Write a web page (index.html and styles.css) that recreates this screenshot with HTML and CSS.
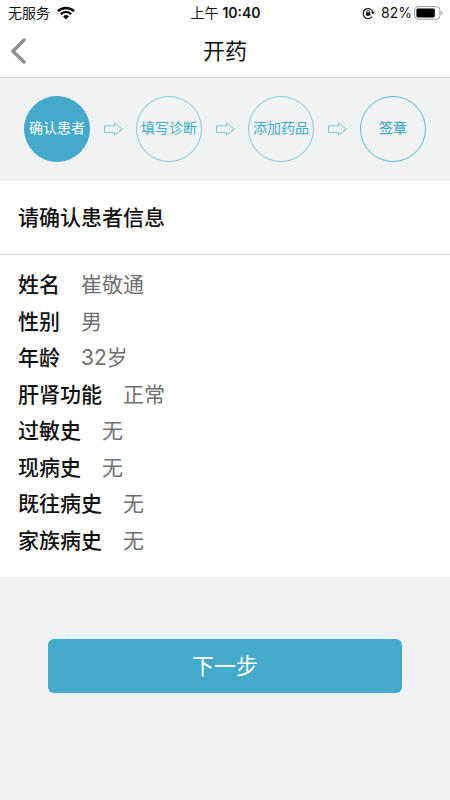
FILE: index.html
```html
<!DOCTYPE html>
<html lang="zh-CN">
<head>
  <meta charset="UTF-8" />
  <meta name="viewport" content="width=device-width, initial-scale=1.0"/>
  <title>开药</title>

  <link rel="stylesheet" href="styles.css">
</head>

<body>
  <div class="status-bar">
    <div class="status-left">
      <span>无服务</span>
      <svg class="wifi" width="18" height="14" viewBox="0 0 18 14">
        <path d="M1 5.2a11.5 11.5 0 0 1 16 0" fill="none" stroke="#000" stroke-width="2.4"/>
        <path d="M3.8 8.2a7.4 7.4 0 0 1 10.4 0" fill="none" stroke="#000" stroke-width="2.1"/>
        <path d="M9 13.4L6.1 10.5a4.1 4.1 0 0 1 5.8 0z"/>
      </svg>
    </div>
    <div class="status-time">上午 <b>10:40</b></div>
    <div class="status-right">
      <svg class="lock" width="13" height="12" viewBox="0 0 13 12">
        <path d="M10.2 9.5A5 5 0 1 1 11 5.2" fill="none" stroke="#111" stroke-width="1.2"/>
        <path d="M8.9 4.8h4L11 7.6z" fill="#111"/>
        <rect x="4" y="5.2" width="4.4" height="3.6" rx=".5" fill="#111"/>
        <path d="M4.9 5.6V4.5a1.3 1.3 0 0 1 2.6 0v1.1" fill="none" stroke="#111" stroke-width=".9"/>
      </svg>
      <span>82%</span>
      <svg class="battery" width="29" height="14" viewBox="0 0 29 14">
        <rect x=".6" y=".6" width="25.3" height="12.6" rx="3.4" fill="none" stroke="#999" stroke-width="1"/>
        <rect x="2.4" y="2.4" width="18.4" height="9" rx="1.4"/>
        <path d="M27.2 4.8c1.5.8 1.5 3.4 0 4.2z" fill="#999"/>
      </svg>
    </div>
  </div>

  <header class="nav-bar">
    <button class="back" type="button" aria-label="返回">
      <svg width="16" height="26" viewBox="0 0 16 26">
        <path d="M14 2L3 13.2L14 24" fill="none" stroke="#8e8e93" stroke-width="3.4" stroke-linecap="round"/>
      </svg>
    </button>
    <h1>开药</h1>
  </header>

  <ol class="steps">
    <li class="step active">确认患者</li>
    <li class="arrow"><svg width="20" height="14" viewBox="0 0 20 14"><path d="M1.5 3.8H11.5V1L19.3 7.2L11.5 13V10.5H1.5z"/></svg></li>
    <li class="step">填写诊断</li>
    <li class="arrow"><svg width="20" height="14" viewBox="0 0 20 14"><path d="M1.5 3.8H11.5V1L19.3 7.2L11.5 13V10.5H1.5z"/></svg></li>
    <li class="step">添加药品</li>
    <li class="arrow"><svg width="20" height="14" viewBox="0 0 20 14"><path d="M1.5 3.8H11.5V1L19.3 7.2L11.5 13V10.5H1.5z"/></svg></li>
    <li class="step sign">签章</li>
  </ol>

  <main>
    <section class="patient">
      <h2>请确认患者信息</h2>
      <dl class="info">
        <div class="row"><dt>姓名</dt><dd>崔敬通</dd></div>
        <div class="row"><dt>性别</dt><dd>男</dd></div>
        <div class="row"><dt>年龄</dt><dd>32岁</dd></div>
        <div class="row"><dt>肝肾功能</dt><dd>正常</dd></div>
        <div class="row"><dt>过敏史</dt><dd>无</dd></div>
        <div class="row"><dt>现病史</dt><dd>无</dd></div>
        <div class="row"><dt>既往病史</dt><dd>无</dd></div>
        <div class="row"><dt>家族病史</dt><dd>无</dd></div>
      </dl>
    </section>

    <button class="next" type="button">下一步</button>
  </main>
</body>
</html>
```

FILE: styles.css
```css
* {
  box-sizing: border-box;
}

body {
  font-family: Inter, "Noto Sans CJK SC", sans-serif;
  background: #f1f3f3;
  color: #111;
  margin: 0;
  min-height: 100vh;
}

h1, h2, ol, dl, dd {
  margin: 0;
  padding: 0;
}

/* Phone status bar */
.status-bar {
  display: grid;
  grid-template-columns: 1fr auto 1fr;
  align-items: center;
  height: 25px;
  padding: 0 7px 0 8px;
  background: #fff;
  font-size: 14px;
  line-height: 25px;
}

.status-left,
.status-right {
  display: flex;
  align-items: center;
}

.status-left {
  gap: 7px;
}

.status-time b {
  font-weight: 600;
}

.status-right {
  justify-content: flex-end;
}

.lock {
  margin-right: 6px;
}

.battery {
  margin-left: 2px;
}

/* Title bar */
.nav-bar {
  display: grid;
  grid-template-columns: 44px 1fr 44px;
  align-items: center;
  height: 53px;
  background: #fff;
  border-bottom: 1px solid #d9dada;
}

.nav-bar h1 {
  font-size: 22px;
  font-weight: 400;
  line-height: 32px;
  text-align: center;
}

.back {
  display: flex;
  padding: 8px 10px;
  border: none;
  background: none;
  cursor: pointer;
}

/* Progress steps */
.steps {
  display: flex;
  justify-content: space-between;
  align-items: center;
  padding: 18px 24px 19px;
  list-style: none;
}

.step {
  display: flex;
  justify-content: center;
  align-items: center;
  width: 66px;
  height: 66px;
  padding-bottom: 2px;
  border: 1px solid #86c8da;
  border-radius: 50%;
  color: #43abc9;
  font-size: 14px;
  line-height: 20px;
  white-space: nowrap;
}

.step.active {
  background: #43abc9;
  border-color: #43abc9;
  color: #fff;
}

.step.sign {
  border-color: #5fb9d1;
  font-weight: 500;
}

.arrow svg {
  display: block;
  fill: none;
  stroke: #7fc5d8;
}

/* Patient details */
.patient {
  background: #fff;
}

.patient h2 {
  padding: 21px 18px 20px;
  border-bottom: 1px solid #dfe0e0;
  font-size: 21px;
  font-weight: 500;
  line-height: 32px;
}

.info {
  display: grid;
  min-height: 322px;
  padding: 12px 18px 18px;
  font-size: 21px;
  line-height: 32px;
}

.row {
  display: flex;
  align-items: center;
  gap: 21px;
}

.row dt {
  font-weight: 500;
}

.row dd {
  color: #707070;
}

.next {
  display: block;
  width: calc(100% - 96px);
  margin: 62px auto 0;
  padding: 11px 0;
  border: none;
  border-radius: 6px;
  background: #43abc9;
  color: #fff;
  font-family: inherit;
  font-size: 22px;
  line-height: 32px;
  cursor: pointer;
}
```
